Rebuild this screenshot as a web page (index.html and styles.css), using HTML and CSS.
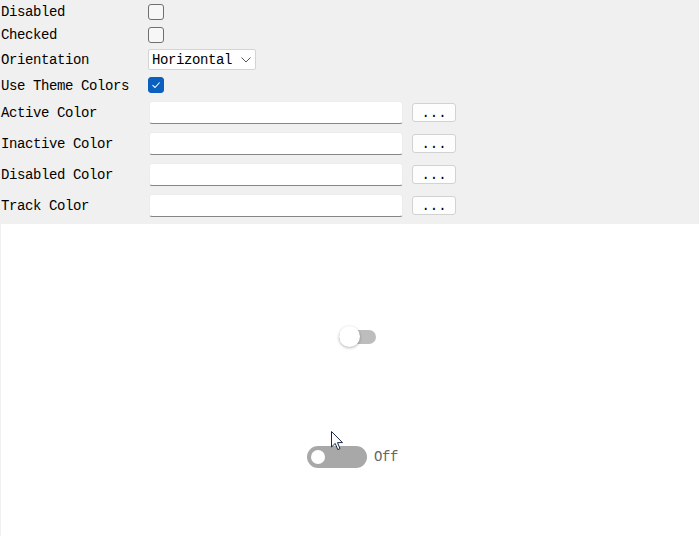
FILE: index.html
```html
<!DOCTYPE html>
<html>
<head>
<meta charset="utf-8">
<link rel="stylesheet" href="styles.css">
</head>
<body>
<div class="panel">
  <div class="row h23"><span class="label">Disabled</span><span class="cb"></span></div>
  <div class="row h23"><span class="label">Checked</span><span class="cb"></span></div>
  <div class="row h27"><span class="label">Orientation</span>
    <span class="select">Horizontal<svg class="chev" width="10" height="6" viewBox="0 0 10 6"><path d="M0.5 0.5 L5 5 L9.5 0.5" fill="none" stroke="#555" stroke-width="1"/></svg></span>
  </div>
  <div class="row h24"><span class="label">Use Theme Colors</span>
    <span class="cb checked"><svg width="10" height="8" viewBox="0 0 10 8"><path d="M1.5 4.2 L4 6.5 L8.6 1.5" fill="none" stroke="#fff" stroke-width="1.1"/></svg></span>
  </div>
  <div class="row h31"><span class="label">Active Color</span><span class="input"></span><span class="btn">...</span></div>
  <div class="row h31"><span class="label">Inactive Color</span><span class="input"></span><span class="btn">...</span></div>
  <div class="row h31"><span class="label">Disabled Color</span><span class="input"></span><span class="btn">...</span></div>
  <div class="row h31"><span class="label">Track Color</span><span class="input"></span><span class="btn">...</span></div>
</div>
<div class="canvas">
  <div class="switch1"><span class="track1"></span><span class="thumb1"></span></div>
  <div class="switch2row"><span class="track2"><span class="thumb2"></span></span><span class="off">Off</span></div>
  <svg class="cursor" width="13" height="20" viewBox="0 0 13 20"><path d="M0.5 0.5 L0.5 16 L4.2 12.4 L6.8 18.6 L9 17.6 L6.5 11.6 L11.5 11.6 Z" fill="#fff" stroke="#1a2a44" stroke-width="1" stroke-linejoin="round"/></svg>
</div>
</body>
</html>
```
FILE: styles.css
```css
html, body {
  margin: 0;
  padding: 0;
  width: 699px;
  height: 536px;
  overflow: hidden;
  background: #f0f0f0;
  font-family: "Liberation Mono", "DejaVu Sans Mono", monospace;
  font-size: 14px;
  letter-spacing: -0.4px;
  color: #000;
}
.panel {
  display: flex;
  flex-direction: column;
  padding-bottom: 3px;
  height: 221px;
}
.row {
  display: flex;
  align-items: center;
}
.h23 { height: 23px; }
.h24 { height: 24px; }
.h27 { height: 27px; }
.h31 { height: 31px; }
.label {
  width: 147px;
  padding-left: 1px;
  padding-top: 1px;
  white-space: nowrap;
}
.cb {
  box-sizing: border-box;
  width: 16px;
  height: 16px;
  border: 1px solid #6f6f6f;
  border-radius: 3px;
  background: #f7f7f7;
  display: flex;
  align-items: center;
  justify-content: center;
}
.cb.checked {
  background: #0a5fbf;
  border-color: #0a5fbf;
}
.select {
  box-sizing: border-box;
  width: 108px;
  height: 21px;
  background: #fff;
  border: 1px solid #d4d4d4;
  border-radius: 2px;
  display: flex;
  align-items: center;
  padding-left: 3px;
  padding-top: 1px;
}
.chev {
  margin-left: 9px;
  margin-top: -1px;
}
.input {
  box-sizing: border-box;
  margin-left: 1px;
  width: 254px;
  height: 23px;
  background: #fff;
  border: 1px solid #ececec;
  border-bottom: 1px solid #868686;
  border-radius: 3px;
}
.btn {
  box-sizing: border-box;
  margin-left: 9px;
  width: 44px;
  height: 19px;
  background: #fdfdfd;
  border: 1px solid #d2d2d2;
  border-radius: 3px;
  display: flex;
  justify-content: center;
  align-items: center;
  line-height: 1;
  padding-top: 1px;
  letter-spacing: 0;
}
.canvas {
  position: relative;
  display: flow-root;
  margin-left: 1px;
  height: 312px;
  background: #fff;
}
.switch1 {
  position: relative;
  margin-left: 337px;
  margin-top: 102px;
  width: 38px;
  height: 22px;
  display: flex;
  align-items: center;
}
.track1 {
  margin-left: 1px;
  width: 37px;
  height: 14px;
  border-radius: 7px;
  background: #bdbdbd;
}
.thumb1 {
  position: absolute;
  left: 1px;
  top: 0;
  width: 21px;
  height: 21px;
  border-radius: 50%;
  background: #fff;
  box-shadow: 0 1px 3px rgba(0,0,0,0.3);
}
.switch2row {
  display: flex;
  align-items: center;
  margin-left: 306px;
  margin-top: 98px;
  height: 22px;
}
.track2 {
  box-sizing: border-box;
  width: 60px;
  height: 22px;
  border-radius: 11px;
  background: #a8a8a8;
  display: flex;
  align-items: center;
  padding-left: 4px;
}
.thumb2 {
  width: 14px;
  height: 14px;
  border-radius: 50%;
  background: #fff;
}
.off {
  margin-left: 7px;
  color: #666;
}
.cursor {
  position: absolute;
  left: 330px;
  top: 207px;
}
```
